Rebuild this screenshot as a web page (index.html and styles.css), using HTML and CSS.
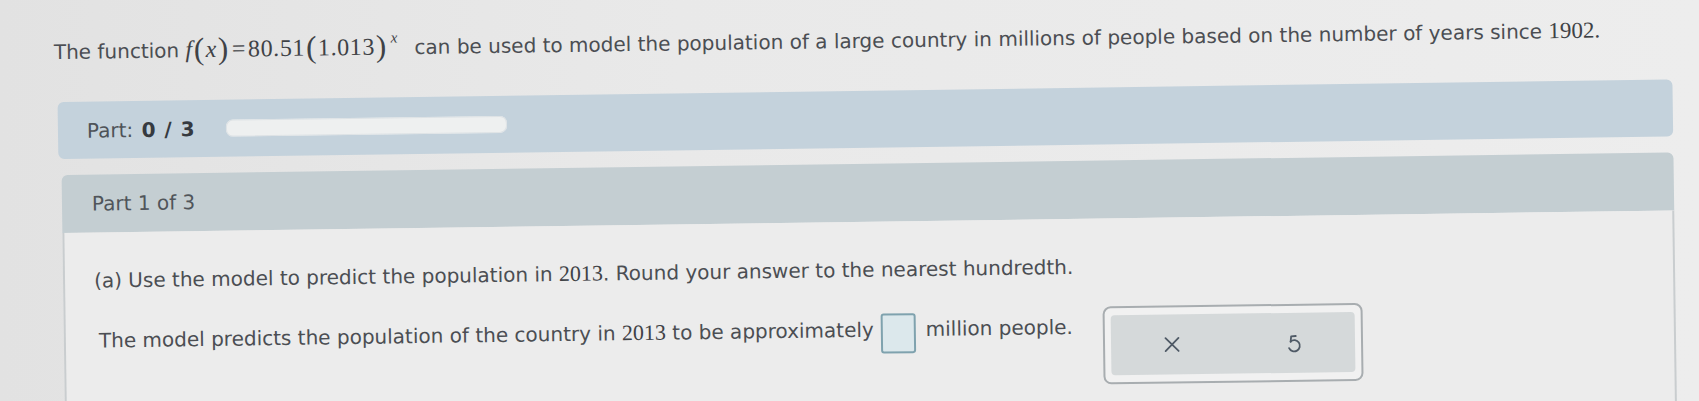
FILE: index.html
```html
<!DOCTYPE html>
<html lang="en">
<head>
<meta charset="utf-8">
<title>Exponential model</title>
<link rel="stylesheet" href="styles.css">
</head>
<body>
<div class="page">
  <p class="intro">The function <span class="math"><i class="mi">f</i><span class="paren">(</span><i class="mi">x</i><span class="paren">)</span><span class="eq">=</span>80.51<span class="paren">(</span>1.013<span class="paren">)</span><sup class="exp"><i>x</i></sup></span> can be used to model the population of a large country in millions of people based on the number of years since <span class="num big">1902.</span></p>

  <div class="part-bar">
    <span class="part-label">Part: <b>0 / 3</b></span>
    <span class="progress"></span>
  </div>

  <section class="section">
    <div class="section-head">Part 1 of 3</div>
    <div class="section-body">
      <p class="question">(a) Use the model to predict the population in <span class="num">2013</span>. Round your answer to the nearest hundredth.</p>
      <div class="answer-row">
        <span class="answer-text">The model predicts the population of the country in <span class="num">2013</span> to be approximately</span>
        <span class="answer-box"></span>
        <span class="answer-text">million people.</span>
        <div class="tools">
          <div class="tools-inner">
            <span class="tool">
              <svg width="18" height="18" viewBox="0 0 18 18"><path d="M2.5 2.5 L15.5 15.5 M15.5 2.5 L2.5 15.5" stroke="#4f5a66" stroke-width="1.8" fill="none" stroke-linecap="round"/></svg>
            </span>
            <span class="tool">
              <svg width="20" height="22" viewBox="0 0 20 22"><path d="M6.6 9.6 A5.6 5.6 0 1 1 5 16.2" stroke="#4f5a66" stroke-width="1.8" fill="none" stroke-linecap="round"/><path d="M6.6 10 L7.2 4.6 L11.8 4.2" stroke="#4f5a66" stroke-width="1.8" fill="none" stroke-linecap="round" stroke-linejoin="round"/></svg>
            </span>
          </div>
        </div>
      </div>
    </div>
  </section>
</div>
</body>
</html>
```

FILE: styles.css
```css
html, body {
  margin: 0;
  padding: 0;
}
body {
  width: 1699px;
  height: 401px;
  overflow: hidden;
  background: linear-gradient(to right, #e2e2e2, #e9e9e9 40%, #ededed);
  font-family: "DejaVu Sans", Verdana, sans-serif;
  color: #4b4e53;
}
.page {
  width: 1699px;
  transform: rotate(-0.8deg);
  transform-origin: 850px 200px;
}
.intro {
  margin: 0;
  padding: 27px 0 0 56px;
  font-size: 20px;
  line-height: 26px;
  height: 26px;
  white-space: nowrap;
}
.math {
  font-family: "Liberation Serif", "Times New Roman", serif;
  font-size: 24px;
  letter-spacing: 0.6px;
  color: #3f4246;
  margin-right: 10px;
}
.mi {
  font-style: italic;
}
.paren {
  font-size: 31px;
  line-height: 0;
  vertical-align: -2px;
  padding: 0 1px;
}
.eq {
  padding: 0 2px;
}
.exp {
  font-size: 15px;
  vertical-align: 12px;
  line-height: 0;
  margin-left: 3px;
}
.num {
  font-family: "Liberation Serif", "Times New Roman", serif;
  font-size: 22px;
  color: #3f4246;
}
.num.big {
  font-size: 23px;
}
.part-bar {
  margin: 38px 25px 0 59px;
  height: 57px;
  background: #c4d2dc;
  border-radius: 6px;
  display: flex;
  align-items: center;
  padding-left: 29px;
  gap: 31px;
}
.part-label {
  font-size: 20px;
  color: #4e5358;
}
.part-label b {
  color: #363a40;
  margin-left: 2px;
  word-spacing: 2px;
}
.progress {
  width: 281px;
  height: 17px;
  background: #eef0f0;
  border-radius: 7px;
  box-shadow: inset 0 0 0 1px #dde2e5;
}
.section {
  margin: 16px 25px 0 62px;
}
.section-head {
  height: 58px;
  background: #c4ced2;
  border-radius: 6px 6px 0 0;
  display: flex;
  align-items: center;
  padding-left: 30px;
  font-size: 20px;
  color: #50555a;
}
.section-body {
  background: #ececec;
  border-left: 2px solid #c9cdcf;
  border-right: 2px solid #c9cdcf;
  height: 240px;
  padding: 35px 0 0 29px;
  box-sizing: border-box;
}
.question {
  margin: 0;
  font-size: 20px;
  line-height: 26px;
}
.answer-row {
  margin-top: 27px;
  display: flex;
  align-items: flex-start;
  padding-left: 4px;
}
.answer-text {
  font-size: 20px;
  line-height: 26px;
  margin-top: 7px;
  white-space: nowrap;
}
.answer-box {
  width: 31px;
  height: 36px;
  margin: 4px 10px 0 7px;
  border: 2px solid #7fa2ae;
  border-radius: 3px;
  background: #dce8ec;
}
.tools {
  margin-left: 30px;
  box-sizing: border-box;
  width: 260px;
  height: 78px;
  border: 2px solid #a8adb0;
  border-radius: 8px;
  background: #f1f1f1;
  padding: 7px 6px;
}
.tools-inner {
  height: 100%;
  background: #d5d9da;
  border-radius: 4px;
  display: flex;
}
.tool {
  flex: 1;
  display: flex;
  align-items: center;
  justify-content: center;
}
```
